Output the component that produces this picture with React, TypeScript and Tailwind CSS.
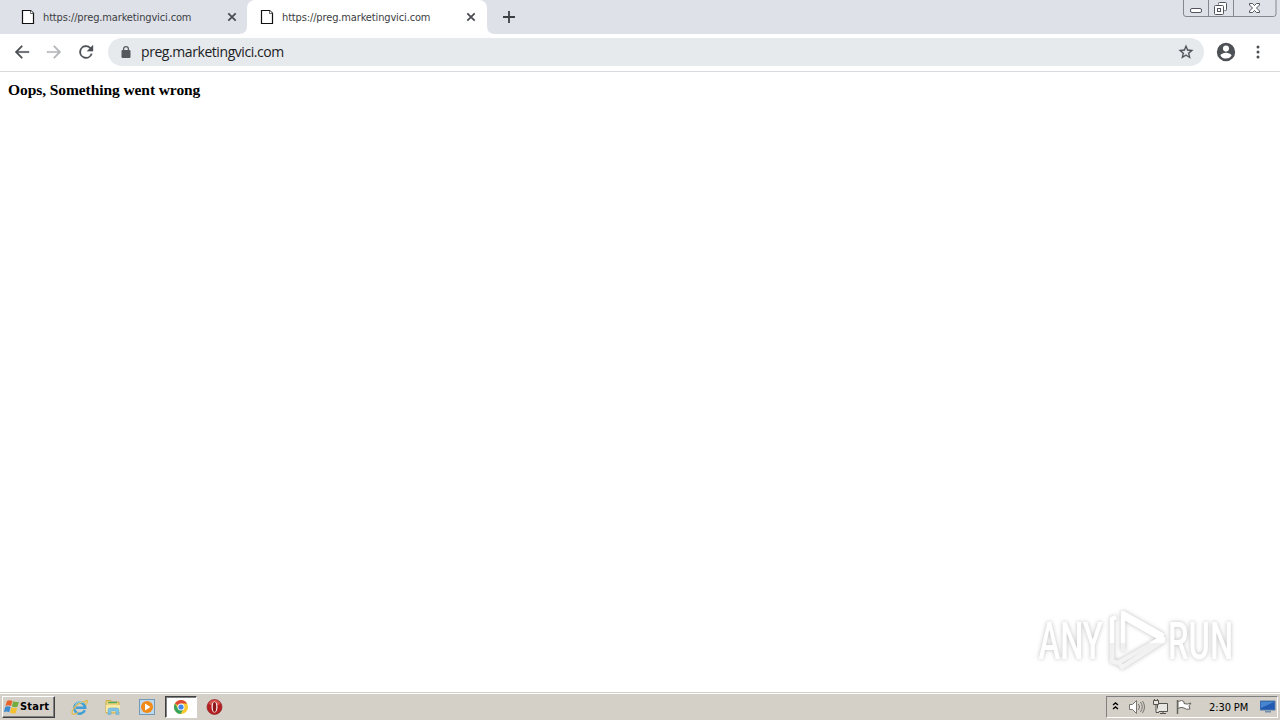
import { ReactNode } from "react";

const PAGE_URL = "https://preg.marketingvici.com";

function PageIcon() {
  return (
    <svg className="h-4 w-4 shrink-0" viewBox="0 0 16 16" fill="#fff" stroke="#111" strokeWidth="1.2">
      <path d="M2.5 1.5h8.200l2.800 2.800v10.200h-11z" />
      <path d="M10.500 1.500v3h3" strokeWidth="0.6" />
    </svg>
  );
}

function CloseIcon() {
  return (
    <svg className="h-2.5 w-2.5 shrink-0" viewBox="0 0 10 10" stroke="#4a4d51" strokeWidth="1.8">
      <path d="M1.300 1.300l7.400 7.400M8.700 1.300L1.300 8.700" />
    </svg>
  );
}

function TabContent() {
  return (
    <>
      <PageIcon />
      <span className="ml-[7px] mt-px w-[184px] whitespace-nowrap text-[11px] leading-4 tracking-[-0.14px] text-[#3c4043]">
        {PAGE_URL}
      </span>
      <CloseIcon />
    </>
  );
}

function WindowControls() {
  return (
    <svg className="ml-auto mr-[3px] h-[18px] w-[94px] self-start" viewBox="0 0 94 18" fill="none" stroke="#84878f">
      <path d="M.5 0v14q0 2.500 2.500 2.500h87.500q2.500 0 2.500-2.500V0M25.500 0v16M50.500 0v16" />
      <g stroke="#50545d">
        <rect x="7.500" y="8.500" width="11" height="4" rx="1.500" fill="#fff" />
        <path d="M35.500 4.500v-1q0-1 1-1h6q1 0 1 1v6q0 1-1 1h-1" fill="#fff" />
        <rect x="31.500" y="5.500" width="9" height="9" rx="1" fill="#fff" />
        <rect x="34.500" y="8.500" width="3" height="3" />
        <path d="M66.500 3.500h3l2 2 2-2h3v1.500l-3 3 3 3v1.500h-3l-2-2-2 2h-3V11l3-3-3-3z" fill="#fff" />
      </g>
    </svg>
  );
}

function TabStrip() {
  return (
    <div className="flex h-[34px] bg-[#dee1e8]">
      <div className="flex w-[247px] items-center pl-5">
        <TabContent />
      </div>
      <div className="relative flex w-60 items-center rounded-t-lg bg-white pl-3">
        <svg className="absolute -left-2 bottom-0 h-2 w-2" viewBox="0 0 8 8" fill="#fff">
          <path d="M8 0v8H0q8 0 8-8" />
        </svg>
        <TabContent />
        <svg className="absolute -right-2 bottom-0 h-2 w-2" viewBox="0 0 8 8" fill="#fff">
          <path d="M0 0v8h8Q0 8 0 0" />
        </svg>
      </div>
      <svg className="ml-4 mt-[11px] h-3 w-3" viewBox="0 0 12 12" stroke="#3c4043" strokeWidth="1.8">
        <path d="M6 0v12M0 6h12" />
      </svg>
      <WindowControls />
    </div>
  );
}

function NavIcon({ d, color }: { d: string; color: string }) {
  return (
    <svg className="h-5 w-5 shrink-0" viewBox="0 0 24 24" fill={color} stroke={color} strokeWidth="0.2">
      <path d={d} />
    </svg>
  );
}

function Toolbar() {
  return (
    <div className="flex h-[38px] items-center border-b border-[#d9dadd] bg-white pb-px pl-3">
      <div className="flex gap-3">
        <NavIcon color="#4d5156" d="M20.500 11H7.300l5.600-5.600L11.500 4l-8 8 8 8 1.400-1.400L7.300 13h13.200z" />
        <NavIcon color="#b4b6b9" d="M3.500 11h13.200l-5.600-5.600L12.500 4l8 8-8 8-1.400-1.400 5.600-5.600H3.500z" />
        <NavIcon
          color="#4d5156"
          d="M17.650 6.350A8 8 0 1 0 19.730 14h-2.080A6 6 0 1 1 12 6c1.660 0 3.140.69 4.220 1.780L13 11h7.500V3.500z"
        />
      </div>
      <div className="ml-3 flex h-7 w-[1096px] items-center rounded-full bg-[#e7eaed] pl-[11px] pr-[10px]">
        <svg className="h-3.5 w-3.5" viewBox="0 0 14 14" fill="#55595e">
          <path d="M4 5V4a3 3 0 0 1 6 0v1h.500a1 1 0 0 1 1 1v6a1 1 0 0 1-1 1h-7a1 1 0 0 1-1-1V6a1 1 0 0 1 1-1zm1.200 0h3.600V4a1.800 1.800 0 0 0-3.600 0z" />
        </svg>
        <span className="ml-2 whitespace-nowrap font-['Open_Sans',sans-serif] text-sm leading-5 tracking-[-0.43px] text-[#202124]">
          preg.marketingvici.com
        </span>
        <svg className="ml-auto h-4 w-4" viewBox="1 1 22 22" fill="#4d5156" stroke="#4d5156" strokeWidth="0.3">
          <path d="M22 9.240l-7.190-.620L12 2 9.190 8.630 2 9.240l5.460 4.730L5.820 21 12 17.270 18.180 21l-1.630-7.030zM12 15.400l-3.760 2.270 1-4.280-3.320-2.880 4.380-.380L12 6.100l1.710 4.040 4.380.380-3.320 2.880 1 4.280z" />
        </svg>
      </div>
      <svg className="ml-[11px] h-[22px] w-[22px]" viewBox="0 0 24 24" fill="#4d5156">
        <path d="M12 2a10 10 0 1 0 0 20 10 10 0 0 0 0-20m0 3a3.300 3.300 0 1 1 0 6.600A3.300 3.300 0 0 1 12 5m0 14.200a7.200 7.200 0 0 1-6-3.220c.03-1.990 4-3.080 6-3.080s5.970 1.090 6 3.080a7.200 7.200 0 0 1-6 3.220" />
      </svg>
      <svg className="ml-[19px] h-4 w-1" viewBox="0 0 4 16" fill="#4d5156">
        <circle cx="2" cy="3" r="1.500" />
        <circle cx="2" cy="8" r="1.500" />
        <circle cx="2" cy="13" r="1.500" />
      </svg>
    </div>
  );
}

function Watermark() {
  return (
    <svg
      className="absolute left-[1030px] top-[602px] h-[76px] w-[230px] drop-shadow-[0_0_2px_rgba(0,0,0,0.26)]"
      viewBox="0 0 230 76"
    >
      <defs>
        <linearGradient id="sheen" x1="0" y1="10" x2="0" y2="68" gradientUnits="userSpaceOnUse">
          <stop offset="0" stopColor="#fff" />
          <stop offset="0.53" stopColor="#fff" />
          <stop offset="0.54" stopColor="#f0f0f0" />
          <stop offset="1" stopColor="#f4f4f4" />
        </linearGradient>
      </defs>
      <g fill="url(#sheen)" fontFamily="Roboto, sans-serif" fontSize="51" fontWeight="500">
        <text transform="translate(8.500 57) scale(0.640 1)">ANY</text>
        <text transform="translate(138 57) scale(0.640 1)">RUN</text>
      </g>
      <g fill="none" stroke="url(#sheen)" strokeWidth="4.500" strokeLinejoin="round">
        <path d="M93 49V11l39 22-2 3-35-20" />
        <path d="M86 15l-4 2v42l6 2 42-24" />
        <path d="M133 35v4L92 65l-2-3" />
      </g>
    </svg>
  );
}

function WindowsFlag() {
  return (
    <svg className="h-4 w-4 shrink-0" viewBox="0 0 16 16">
      <path d="M3 2q2.500-1.500 5.500 0L7 7Q4 5.500 1.500 7z" fill="#e8622a" />
      <path d="M9.300 2.300q3 1.500 5.700.200L13.500 7.800q-2.500 1.200-5.700-.500z" fill="#74ad3f" />
      <path d="M1.200 8Q4 6.500 6.700 8l-1.500 5.300Q2.500 12-.200 13.200z" fill="#3d8bd1" />
      <path d="M7.500 8.300q3 1.700 5.700.500L11.700 14q-2.500 1.200-5.700-.400z" fill="#f6bf2e" />
    </svg>
  );
}

function IeIcon() {
  return (
    <svg className="h-[18px] w-[18px]" viewBox="0 0 18 18" fill="none">
      <path d="M14.800 12.200A5.500 5.500 0 1 1 15.200 9.800H6" stroke="#429fd5" strokeWidth="2.500" />
      <path d="M14 4.500c4-4 4.500-1.500 1.500 2.500M4 10c-4 6-1.500 8 4 4.500M3.500 11Q7 5 14 3.500" stroke="#dfbd55" strokeWidth="1.300" />
      <path d="M5.500 7a5 5 0 0 1 8-2" stroke="#91d4f1" />
    </svg>
  );
}

function FolderIcon() {
  return (
    <svg className="h-[18px] w-[18px]" viewBox="0 0 18 18">
      <path d="M2 2.500h5l1 1.500h7v11H2z" fill="#ecd477" stroke="#cfae4d" />
      <path d="M4 4.500h9" stroke="#52a861" strokeWidth="1.500" />
      <path d="M2 7h14v7H2z" fill="#f8e9a5" />
      <path d="M4 16.500V12q0-2 2-2h7q2 0 2 2v4.500h-3V13H7v3.500z" fill="#80c3e5" stroke="#5ca5cc" strokeWidth=".5" />
    </svg>
  );
}

function MediaIcon() {
  return (
    <svg className="h-[18px] w-[18px]" viewBox="0 0 18 18">
      <rect x="1.500" y="1.500" width="15" height="15" fill="#bed9ed" stroke="#7199b8" />
      <circle cx="9" cy="9" r="6" fill="#f28a17" />
      <path d="M7 5.500v7L12.500 9z" fill="#fff" />
    </svg>
  );
}

function ChromeIcon() {
  return (
    <svg className="h-4 w-4" viewBox="0 0 16 16">
      <circle cx="8" cy="8" r="7" fill="#f9c92f" />
      <path d="M8 8L1.940 4.500A7 7 0 0 1 14.060 4.500H8z" fill="#df4937" />
      <path d="M1.940 4.500A7 7 0 0 0 7.500 15l3.200-5.200L5 9.500z" fill="#36a45a" />
      <circle cx="8" cy="8" r="3.500" fill="#fff" />
      <circle cx="8" cy="8" r="2.600" fill="#4385ec" />
    </svg>
  );
}

function OperaIcon() {
  return (
    <svg className="h-[18px] w-[18px]" viewBox="0 0 18 18">
      <circle cx="9.500" cy="9" r="7.500" fill="#b51e22" stroke="#85191b" strokeWidth=".6" />
      <path d="M3.500 6a6.500 6.500 0 0 1 12 0q-6 3-12 0" fill="#d8524b" />
      <ellipse cx="9.500" cy="9" rx="3" ry="5.500" fill="#fff" />
      <ellipse cx="9.500" cy="9" rx="1.800" ry="5" fill="#8f1719" />
    </svg>
  );
}

function QuickLaunch({ children }: { children: ReactNode }) {
  return <div className="flex h-5 w-[34px] items-center justify-center">{children}</div>;
}

function SystemTray() {
  return (
    <div className="ml-auto mr-0.5 flex h-[22px] w-[172px] items-center border border-b-white border-l-[#808080] border-r-white border-t-[#808080] text-black">
      <svg className="mb-0.5 ml-[5px] h-2 w-[7px]" viewBox="0 0 7 8" fill="none" stroke="#000" strokeWidth="1.400">
        <path d="M1 3l2.500-2L6 3M1 7l2.500-2L6 7" />
      </svg>
      <svg className="ml-[9px] h-4 w-[18px]" viewBox="0 0 18 16" fill="#fff" stroke="#77756f">
        <path d="M1.500 5.500h3l4-4v13l-4-4h-3z" />
        <path d="M10.500 5q2 3 0 6M12.500 3q3.500 5 0 10M14.500 2q4 6 0 12" fill="none" />
      </svg>
      <svg className="ml-1.5 h-4 w-4" viewBox="0 0 16 16" fill="#e9e7e1" stroke="#56544f">
        <path d="M5.500 4.500h10v8h-10zM8 14.500h6M11 12.500v2" />
        <path d="M1.500 1.500h5v4h-5zM4 5.500v8h3M2.500 0v2M5.500 0v2" />
      </svg>
      <svg className="ml-2 h-4 w-4" viewBox="0 0 16 16" fill="#fff" stroke="#66645e">
        <path d="M1.500 1v14" strokeWidth="1.500" />
        <path d="M2 2.500q4-2 6 0v2q3 1.500 7-.500l-2 3 1 3q-4 1-6-1-3-1.500-6 .500z" />
      </svg>
      <span className="ml-[17px] w-10 whitespace-nowrap pt-px text-[11px] leading-4 tracking-[-0.1px]">2:30 PM</span>
      <svg className="ml-[11px] h-4 w-4 shrink-0" viewBox="0 0 16 16">
        <path d="M0 2h15v9H0z" fill="#225ab1" stroke="#517aaa" />
        <path d="M1 3h13L1 9z" fill="#4686d1" />
        <path d="M5 12h6v1.500H5z" fill="#6f8ead" />
      </svg>
    </div>
  );
}

function Taskbar() {
  return (
    <div className="flex h-7 items-center border-t border-[#d4d0c8] bg-[#d4d0c8] pt-px shadow-[inset_0_1px_0_#fff]">
      <div className="ml-0.5 flex h-[22px] w-[53px] items-center border border-b-[#404040] border-l-white border-r-[#404040] border-t-white pl-px text-[11px] font-bold text-black shadow-[inset_-1px_-1px_0_#808080]">
        <WindowsFlag />
        <span className="pt-px tracking-[0.2px]">Start</span>
      </div>
      <div className="ml-[7px] flex items-center">
        <QuickLaunch><IeIcon /></QuickLaunch>
        <QuickLaunch><FolderIcon /></QuickLaunch>
        <QuickLaunch><MediaIcon /></QuickLaunch>
        <div className="ml-px flex h-[22px] w-8 items-center justify-center border border-b-white border-l-[#404040] border-r-white border-t-[#404040] bg-white shadow-[inset_1px_1px_0_#808080]">
          <ChromeIcon />
        </div>
        <QuickLaunch><OperaIcon /></QuickLaunch>
      </div>
      <SystemTray />
    </div>
  );
}

export default function App() {
  return (
    <div className="relative flex h-[720px] w-[1280px] flex-col overflow-hidden bg-white font-['DejaVu_Sans_Condensed','DejaVu_Sans',sans-serif]">
      <TabStrip />
      <Toolbar />
      <main className="flex-1 px-2 pt-[9px] font-['Liberation_Serif',serif] text-[15.500px] font-bold leading-[18px] tracking-[-0.080px] text-black">
        Oops, Something went wrong
      </main>
      <Watermark />
      <Taskbar />
    </div>
  );
}
